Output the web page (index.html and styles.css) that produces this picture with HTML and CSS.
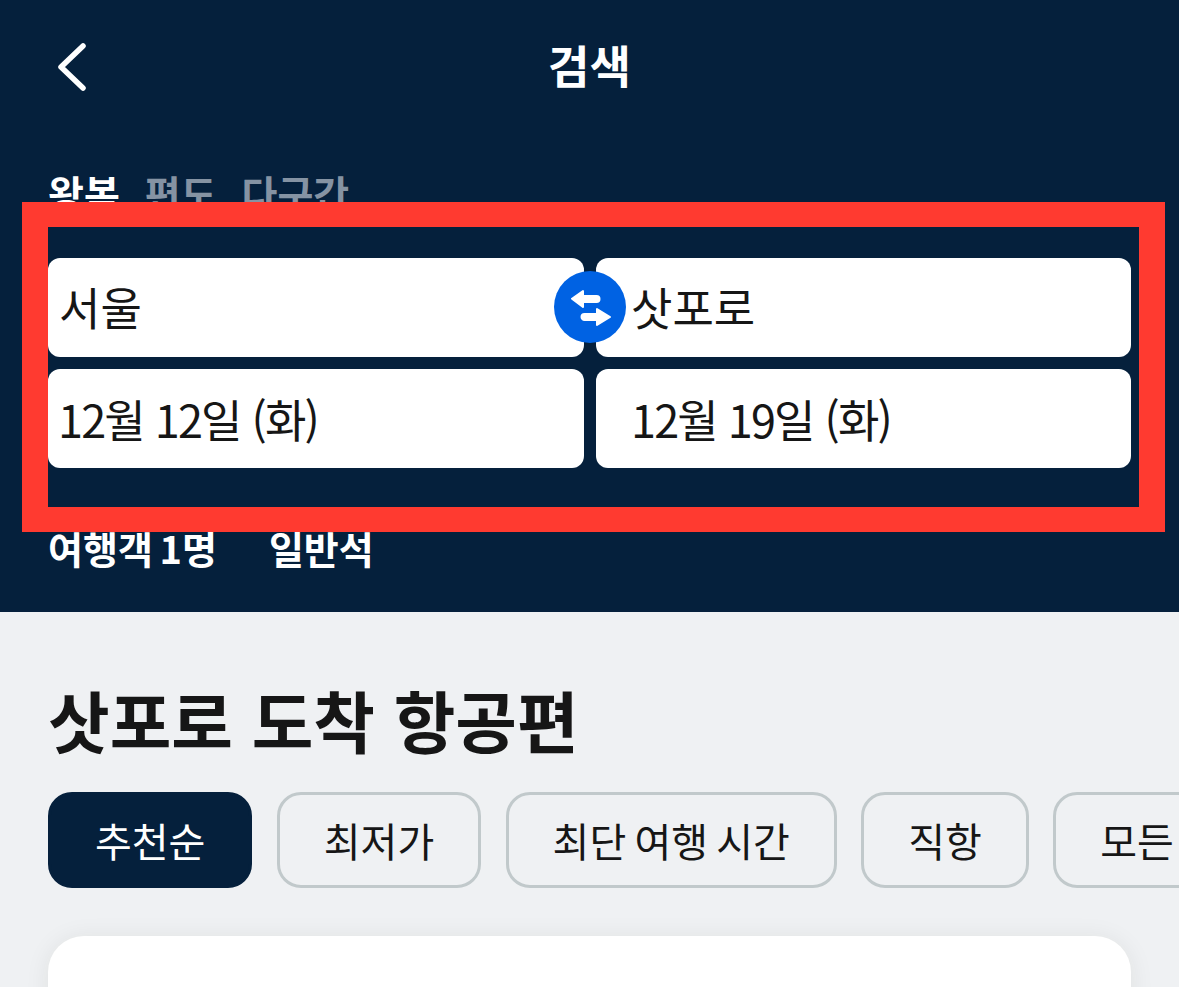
FILE: index.html
```html
<!DOCTYPE html>
<html lang="ko">
<head>
  <meta charset="UTF-8" />
  <meta name="viewport" content="width=device-width, initial-scale=1" />
  <title>검색</title>
  <link rel="stylesheet" href="styles.css">
</head>
<body>
  <div class="screen">
    <!-- Navy search header -->
    <header class="search-header">
      <div class="top-bar">
        <svg class="back-icon" viewBox="0 0 32 48" width="32" height="48" aria-hidden="true">
          <path d="M27 3 L5 24 L27 45" fill="none" stroke="#fff" stroke-width="5.5" stroke-linecap="round" stroke-linejoin="round" />
        </svg>
        <div class="page-title">검색</div>
      </div>
      <div class="trip-tabs">
        <span class="trip-tab active">왕복</span>
        <span class="trip-tab">편도</span>
        <span class="trip-tab">다구간</span>
      </div>
      <div class="fields">
        <div class="field field-city">서울</div>
        <div class="field field-city field-right">삿포로</div>
        <div class="field field-date">12월 12일 (화)</div>
        <div class="field field-date field-right">12월 19일 (화)</div>
        <div class="swap-btn">
          <svg viewBox="-1 -1 42 38" width="42" height="38" aria-hidden="true">
            <path d="M2 9.7 L13 2 V7 H26.5 a2.5 2.5 0 0 1 0 6 H13 V18 Z" fill="#fff" stroke="#fff" stroke-width="2" stroke-linejoin="round" />
            <path d="M40 28 L27 20 V25 H14.5 a2.5 2.5 0 0 0 0 6 H27 V36 Z" fill="#fff" stroke="#fff" stroke-width="2" stroke-linejoin="round" />
          </svg>
        </div>
      </div>
      <div class="trip-options">
        <span class="passengers">여행객 1명</span>
        <span>일반석</span>
      </div>
    </header>

    <!-- Results -->
    <main class="results">
      <h1 class="results-title">삿포로 도착 항공편</h1>
      <div class="chips">
        <div class="chip active">추천순</div>
        <div class="chip">최저가</div>
        <div class="chip">최단 여행 시간</div>
        <div class="chip">직항</div>
        <div class="chip chip-last">모든</div>
      </div>
      <div class="result-card"></div>
    </main>

    <!-- Red highlight drawn over the screenshot -->
    <div class="highlight"></div>
  </div>
</body>
</html>
```

FILE: styles.css
```css
body {
  margin: 0;
  font-family: "Noto Sans CJK KR", "Noto Sans", sans-serif;
  background: #eff1f3;
}
.screen {
  position: relative;
  height: 987px;
  overflow: hidden;
}
/* Header */
.search-header {
  height: 612px;
  box-sizing: border-box;
  padding: 0 48px;
  background: #05203c;
  color: #fff;
}
.top-bar {
  position: relative;
  display: flex;
  align-items: center;
  justify-content: center;
  height: 128px;
}
.back-icon {
  position: absolute;
  left: 8px;
  top: 43px;
}
.page-title {
  font-size: 45px;
  font-weight: 700;
  line-height: 1;
}
.trip-tabs {
  display: flex;
  gap: 25px;
  height: 130px;
  padding-top: 42px;
  box-sizing: border-box;
  font-size: 39px;
  font-weight: 700;
  line-height: 44px;
}
.trip-tab {
  color: #8593a3;
}
.trip-tab.active {
  color: #fff;
}
/* Origin, destination and date fields */
.fields {
  position: relative;
  display: grid;
  grid-template-columns: 536px 535px;
  grid-auto-rows: 99px;
  gap: 12px;
}
.field {
  display: flex;
  align-items: center;
  padding-left: 11px;
  background: #fff;
  border-radius: 12px;
  color: #161616;
  font-size: 45px;
  line-height: 1;
}
.field-city {
  padding-bottom: 3px;
  box-sizing: border-box;
}
.field-date {
  padding-left: 10px;
  letter-spacing: -1.8px;
}
.field-right {
  padding-left: 35px;
}
.swap-btn {
  position: absolute;
  left: 506px;
  top: 13px;
  display: flex;
  align-items: center;
  justify-content: center;
  width: 72px;
  height: 72px;
  border-radius: 50%;
  background: #0062e3;
}
.trip-options {
  display: flex;
  gap: 52px;
  margin-top: 57px;
  font-size: 38px;
  font-weight: 700;
  line-height: 46px;
}
.passengers {
  word-spacing: -4px;
}
/* Results */
.results {
  padding: 0 48px;
}
.results-title {
  margin: 0;
  padding-top: 70px;
  font-size: 67px;
  font-weight: 700;
  line-height: 74px;
  color: #161616;
}
.chips {
  display: flex;
  gap: 24.4px;
  margin-top: 36px;
  white-space: nowrap;
}
.chip {
  flex: none;
  box-sizing: border-box;
  height: 96px;
  padding: 0 44px;
  display: flex;
  align-items: center;
  border: 3px solid #c1c9cb;
  border-radius: 24px;
  color: #161616;
  font-size: 40px;
  word-spacing: -3px;
}
.chip.active {
  background: #05203c;
  border-color: #05203c;
  color: #fff;
}
/* Only the start of this chip fits on screen */
.chip-last {
  min-width: 240px;
}
.result-card {
  height: 300px;
  margin-top: 48px;
  background: #fff;
  border-radius: 36px;
  box-shadow: 0 2px 24px rgba(37, 32, 31, 0.08);
}
/* Red annotation box */
.highlight {
  position: absolute;
  left: 22px;
  top: 202px;
  width: 1143px;
  height: 330px;
  box-sizing: border-box;
  border-style: solid;
  border-color: #ff3a30;
  border-width: 25px 26px;
}
```
